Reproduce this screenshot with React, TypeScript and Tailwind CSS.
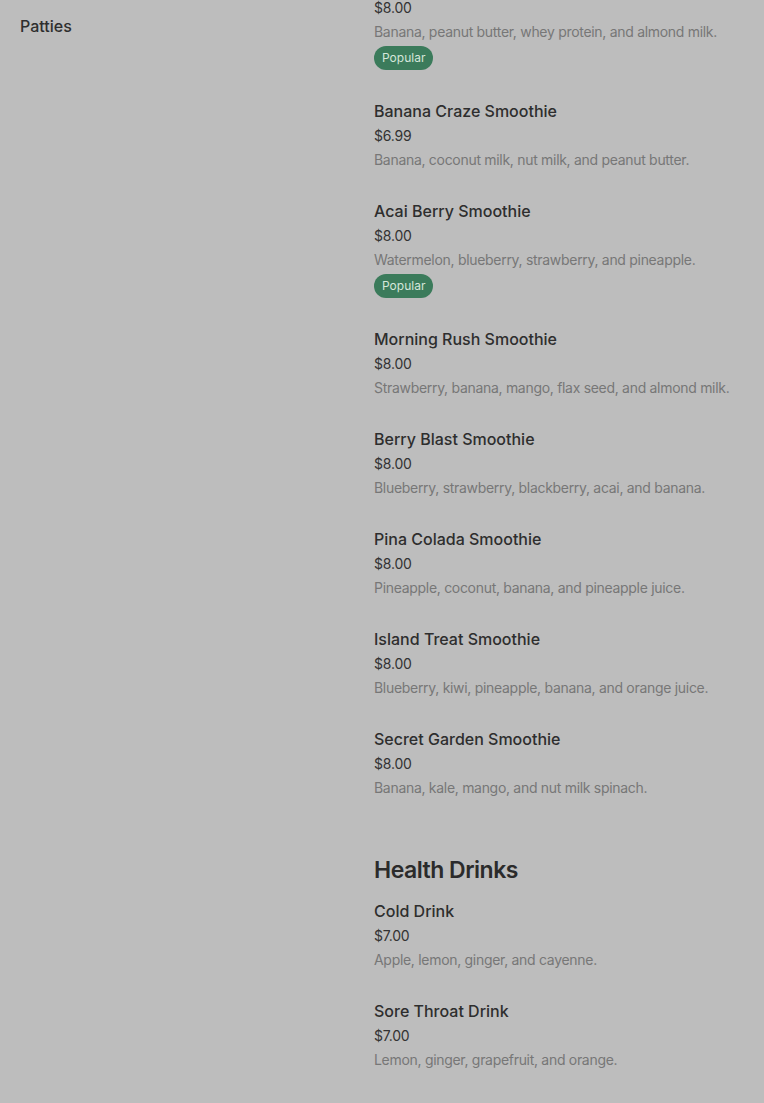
const smoothies = [
    { name: "Peanut Butter Smoothie", price: "$8.00", desc: "Banana, peanut butter, whey protein, and almond milk.", popular: true },
    { name: "Banana Craze Smoothie", price: "$6.99", desc: "Banana, coconut milk, nut milk, and peanut butter.", popular: false },
    { name: "Acai Berry Smoothie", price: "$8.00", desc: "Watermelon, blueberry, strawberry, and pineapple.", popular: true },
    { name: "Morning Rush Smoothie", price: "$8.00", desc: "Strawberry, banana, mango, flax seed, and almond milk.", popular: false },
    { name: "Berry Blast Smoothie", price: "$8.00", desc: "Blueberry, strawberry, blackberry, acai, and banana.", popular: false },
    { name: "Pina Colada Smoothie", price: "$8.00", desc: "Pineapple, coconut, banana, and pineapple juice.", popular: false },
    { name: "Island Treat Smoothie", price: "$8.00", desc: "Blueberry, kiwi, pineapple, banana, and orange juice.", popular: false },
    { name: "Secret Garden Smoothie", price: "$8.00", desc: "Banana, kale, mango, and nut milk spinach.", popular: false },
];

const healthDrinks = [
    { name: "Cold Drink", price: "$7.00", desc: "Apple, lemon, ginger, and cayenne.", popular: false },
    { name: "Sore Throat Drink", price: "$7.00", desc: "Lemon, ginger, grapefruit, and orange.", popular: false },
];

interface IMenuItem {
    name: string;
    price: string;
    desc: string;
    popular: boolean;
}

function MenuItem({ item }: { item: IMenuItem }) {
    return (
        <div className="flex flex-col items-start pb-[27px]">
            <p className="text-[16px] leading-6 font-medium text-[#2e2e2e]">{item.name}</p>
            <p className="mt-px text-[14px] leading-6 tracking-[-0.2px] text-[#333333]">{item.price}</p>
            <p className="text-[14px] leading-6 tracking-[-0.3px] text-[#777777]">{item.desc}</p>
            {item.popular && (
                <span className="mt-[2px] mb-[2px] h-6 px-2 rounded-full bg-[#3b7b5b] text-[#d5e6da] text-[12px] leading-6">
                    Popular
                </span>
            )}
        </div>
    );
}

export default function App() {
    return (
        <div
            className="h-[1103px] w-full overflow-hidden bg-[#bdbdbd] flex"
            style={{ fontFamily: "Inter, 'Noto Sans', sans-serif" }}
        >
            <aside className="w-[374px] shrink-0 pl-5 pt-[14px]">
                <p className="text-[16px] leading-6 font-medium text-[#2e2e2e]">Patties</p>
            </aside>
            <main className="flex-1 -mt-[29px]">
                <section>
                    {smoothies.map((item) => (
                        <MenuItem key={item.name} item={item} />
                    ))}
                </section>
                <section className="mt-[27px]">
                    <h2 className="text-[23px] leading-8 font-semibold tracking-[-0.5px] text-[#2b2b2b] mb-[13px]">Health Drinks</h2>
                    {healthDrinks.map((item) => (
                        <MenuItem key={item.name} item={item} />
                    ))}
                </section>
            </main>
        </div>
    );
}
